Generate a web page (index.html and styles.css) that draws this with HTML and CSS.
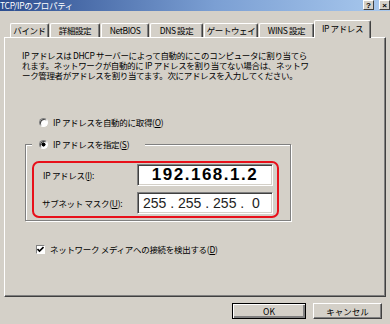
FILE: index.html
```html
<!DOCTYPE html>
<html lang="ja">
<head>
    <meta charset="UTF-8">
    <meta name="viewport" content="width=device-width, initial-scale=1.0">
    <title>TCP/IPのプロパティ</title>

    <link rel="stylesheet" href="styles.css">

</head>
<body>
    <header class="titlebar">
        <span class="title">TCP/IPのプロパティ</span>
        <div class="title-btns">
            <span class="tbtn">?</span>
            <span class="tbtn">×</span>
        </div>
    </header>

    <nav class="tabs">
        <span class="tab w1">バインド</span>
        <span class="tab w2">詳細設定</span>
        <span class="tab w3">NetBIOS</span>
        <span class="tab w4">DNS 設定</span>
        <span class="tab w5">ゲートウェイ</span>
        <span class="tab w6">WINS 設定</span>
        <span class="tab w7 active">IP アドレス</span>
    </nav>

    <main class="panel">
        <p class="desc">IP アドレスは DHCP サーバーによって自動的にこのコンピュータに割り当てら<br>れます。ネットワークが自動的に IP アドレスを割り当てない場合は、ネットワ<br>ーク管理者がアドレスを割り当てます。次にアドレスを入力してください。</p>

        <label class="opt auto"><span class="radio"></span>IP アドレスを自動的に取得(<u>O</u>)</label>

        <fieldset class="group">
            <legend class="opt"><span class="radio on"></span>IP アドレスを指定(<u>S</u>)</legend>
            <div class="highlight">
                <div class="row">
                    <span class="lbl ip-lbl">IP アドレス(<u>I</u>):</span>
                    <span class="ipbox ip">192.168.1.2</span>
                </div>
                <div class="row">
                    <span class="lbl">サブネット マスク(<u>U</u>):</span>
                    <span class="ipbox mask">255 . 255 . 255 .  0</span>
                </div>
            </div>
        </fieldset>

        <label class="opt detect">
            <span class="checkbox">
                <svg width="7" height="7" viewBox="0 0 7 7"><polyline points="0.5,3 2.5,5 6.5,1" fill="none" stroke="#000" stroke-width="1.6"/></svg>
            </span>ネットワーク メディアへの接続を検出する(<u>D</u>)
        </label>
    </main>

    <footer class="buttons">
        <button class="btn default">OK</button>
        <button class="btn">キャンセル</button>
    </footer>
</body>
</html>
```

FILE: styles.css
```css
html{
    box-sizing: border-box;
    font-family: "Noto Sans CJK JP", sans-serif;
    font-size: 8.5px;
}

*, *::after, *::before{
    box-sizing: inherit;
}

body{
    margin: 0;
    width: 390px;
    height: 324px;
    overflow: hidden;
    background-color: #d4d0c8;
    color: #000;
    line-height: 10px;
}

u{
    text-decoration-thickness: 1px;
    text-underline-offset: 1px;
}

/* barra de titulo */
.titlebar{
    display: flex;
    justify-content: space-between;
    height: 11px;
    background: linear-gradient(to right, #2c4d8f, #7b9fd3 55%, #a9c9ee);
    color: #fff;
    font-size: 8.5px;
}

.title{
    line-height: 11px;
    letter-spacing: -0.3px;
}

.title-btns{
    display: flex;
    gap: 5px;
    align-items: flex-start;
}

.tbtn{
    width: 11px;
    height: 10px;
    background-color: #d4d0c8;
    color: #000;
    font: bold 8px/9px "Liberation Sans", sans-serif;
    text-align: center;
    border: 1px solid;
    border-color: #fff #404040 #404040 #fff;
}

/* pestañas */
.tabs{
    display: flex;
    align-items: flex-end;
    height: 26px;
    padding-left: 10px;
}

.tab{
    height: 14px;
    line-height: 12px;
    text-align: center;
    letter-spacing: -0.4px;
    border: 1px solid;
    border-bottom: none;
    border-color: #fff #404040 #fff #fff;
    border-radius: 2px 2px 0 0;
    box-shadow: inset -1px 0 #808080;
    margin-right: 1px;
}

.tab.active{
    position: relative;
    height: 18px;
    margin-bottom: -1px;
    margin-left: -1px;
    background-color: #d4d0c8;
    line-height: 14px;
}

.w1{ width: 39px; }
.w2{ width: 50px; }
.w3{ width: 48px; }
.w4{ width: 53px; }
.w5{ width: 54px; }
.w6{ width: 55px; }
.w7{ width: 57px; }

/* panel */
.panel{
    display: flex;
    flex-direction: column;
    align-items: flex-start;
    margin-left: 4px;
    width: 382px;
    height: 260px;
    border: 1px solid;
    border-color: #fff #404040 #404040 #fff;
    box-shadow: inset -1px -1px #808080;
    padding: 12px 0 0 17px;
}

.desc{
    margin: 0;
    letter-spacing: -0.35px;
    line-height: 10px;
}

.opt{
    display: flex;
    align-items: center;
    height: 10px;
    letter-spacing: -0.3px;
}

.auto{
    margin: 37px 0 0 17px;
}

.radio{
    width: 9px;
    height: 9px;
    margin-right: 5px;
    border-radius: 50%;
    border: 1px solid;
    border-color: #808080 #fff #fff #808080;
    background-color: #fff;
    box-shadow: inset 1px 1px #404040;
}

.radio.on{
    background: radial-gradient(circle, #000 1.8px, #fff 2.3px);
}

/* grupo */
.group{
    margin: 12px 0 0 3px;
    width: 266px;
    padding: 12px 0 2px 6px;
    border: 1px solid #808080;
    box-shadow: inset 1px 1px #fff, 1px 1px #fff;
}

.group legend{
    padding: 0 16px 0 7px;
    background-color: #d4d0c8;
}

.highlight{
    width: 247px;
    border: 2px solid #e8101a;
    border-radius: 7px;
    padding: 1px 4px 2px 8px;
    display: flex;
    flex-direction: column;
    gap: 6px;
}

.row{
    display: flex;
    align-items: center;
}

.lbl{
    width: 95px;
    letter-spacing: -0.3px;
}

.ip-lbl{
    padding-left: 1px;
}

.ipbox{
    width: 136px;
    height: 22px;
    background-color: #fff;
    border: 1px solid;
    border-color: #808080 #fff #fff #808080;
    box-shadow: inset 1px 1px #404040, inset -1px -1px #d4d0c8;
    font-family: "Liberation Sans", sans-serif;
    white-space: pre;
}

.ip{
    text-align: center;
    font-size: 17px;
    font-weight: bold;
    letter-spacing: 1.5px;
    line-height: 20px;
}

.mask{
    padding-left: 5px;
    font-size: 14px;
    line-height: 20px;
    color: #222;
}

/* casilla */
.detect{
    margin: 23px 0 0 14px;
}

.checkbox{
    display: flex;
    align-items: center;
    justify-content: center;
    width: 9px;
    height: 9px;
    margin-right: 5px;
    background-color: #fff;
    border: 1px solid;
    border-color: #808080 #fff #fff #808080;
}

/* botones */
.buttons{
    display: flex;
    justify-content: flex-end;
    gap: 7px;
    padding: 6px 8px 0 0;
}

.btn{
    height: 16px;
    padding: 0;
    margin: 0;
    font-family: "Noto Sans CJK JP", sans-serif;
    font-size: 8.5px;
    line-height: 12px;
    background-color: #d4d0c8;
    border: 1px solid;
    border-color: #fff #404040 #404040 #fff;
    box-shadow: inset -1px -1px #808080;
}

.btn.default{
    width: 74px;
    border-color: #000;
    box-shadow: inset 1px 1px #fff, inset -2px -2px #808080;
}

.btn:last-child{
    width: 69px;
}
```
